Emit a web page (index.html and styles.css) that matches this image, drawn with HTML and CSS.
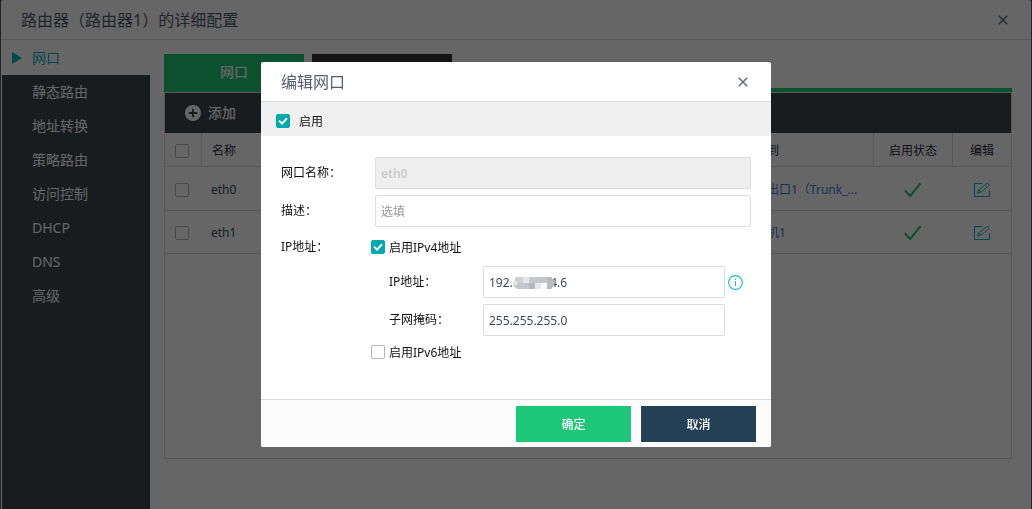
FILE: index.html
```html
<!DOCTYPE html>
<html lang="zh-CN">
<head>
<meta charset="utf-8">
<title>路由器（路由器1）的详细配置</title>
<meta name="viewport" content="width=device-width, initial-scale=1">
<link rel="stylesheet" href="styles.css">
</head>
<body>
<div class="page">
  <header class="page-header">
    <h1 class="title">路由器（路由器1）的详细配置</h1>
    <button class="close" type="button" aria-label="关闭"><svg width="10" height="10" viewBox="0 0 10 10"><path d="M.8.8l8.4 8.4M9.2.8L.8 9.2" fill="none" stroke="currentColor" stroke-width="1.5"/></svg></button>
  </header>
  <div class="page-body">
    <nav class="sidebar">
      <a class="nav-item active" href="#"><svg class="arrow" width="10" height="12" viewBox="0 0 10 12"><path d="M0 0l10 6L0 12z" fill="currentColor"/></svg>网口</a>
      <a class="nav-item" href="#">静态路由</a>
      <a class="nav-item" href="#">地址转换</a>
      <a class="nav-item" href="#">策略路由</a>
      <a class="nav-item" href="#">访问控制</a>
      <a class="nav-item" href="#">DHCP</a>
      <a class="nav-item" href="#">DNS</a>
      <a class="nav-item" href="#">高级</a>
    </nav>
    <main class="content">
      <div class="tabs">
        <button class="tab current" type="button">网口</button>
        <button class="tab" type="button" aria-label="子网口"></button>
      </div>
      <section class="panel">
        <div class="toolbar">
          <button class="add" type="button"><svg width="16" height="16" viewBox="0 0 16 16"><circle cx="8" cy="8" r="8" fill="currentColor"/><path d="M8 3.8v8.4M3.8 8h8.4" stroke="#3c464d" stroke-width="1.8"/></svg>添加</button>
        </div>
        <table class="ports">
          <colgroup><col class="c-check"><col><col class="c-link"><col class="c-state"><col class="c-edit"></colgroup>
          <thead>
            <tr><th class="pick"><input class="check" type="checkbox" aria-label="全选"></th><th class="name">名称</th><th class="link">连接到</th><th class="lined">启用状态</th><th class="lined">编辑</th></tr>
          </thead>
          <tbody>
            <tr>
              <td class="pick"><input class="check" type="checkbox" aria-label="选择 eth0"></td><td class="name">eth0</td><td class="link"><a href="#">网络出口1（Trunk_...</a></td>
              <td><svg class="tick" width="18" height="16" viewBox="0 0 18 16"><path d="M.8 8.3l5.4 5.7L16.4 1.4" fill="none" stroke="currentColor" stroke-width="2"/></svg></td>
              <td><button class="edit" type="button" aria-label="编辑 eth0"><svg width="17" height="16" viewBox="0 0 17 16"><path d="M9.5 1.5h-8v13h15V8.5" fill="none" stroke="currentColor"/><path d="M4.5 11.2l1.2-3.4 8.2-6.2c1.1-.8 2.9.9 2 2L8.2 10zM5.7 7.8L8.2 10" fill="none" stroke="currentColor" stroke-width=".9"/></svg></button></td>
            </tr>
            <tr>
              <td class="pick"><input class="check" type="checkbox" aria-label="选择 eth1"></td><td class="name">eth1</td><td class="link"><a href="#">交换机1</a></td>
              <td><svg class="tick" width="18" height="16" viewBox="0 0 18 16"><path d="M.8 8.3l5.4 5.7L16.4 1.4" fill="none" stroke="currentColor" stroke-width="2"/></svg></td>
              <td><button class="edit" type="button" aria-label="编辑 eth1"><svg width="17" height="16" viewBox="0 0 17 16"><path d="M9.5 1.5h-8v13h15V8.5" fill="none" stroke="currentColor"/><path d="M4.5 11.2l1.2-3.4 8.2-6.2c1.1-.8 2.9.9 2 2L8.2 10zM5.7 7.8L8.2 10" fill="none" stroke="currentColor" stroke-width=".9"/></svg></button></td>
            </tr>
          </tbody>
        </table>
      </section>
    </main>
  </div>
</div>

<div class="overlay">
  <form class="dialog" role="dialog" aria-labelledby="dialog-title">
    <header class="dialog-header">
      <h2 class="title" id="dialog-title">编辑网口</h2>
      <button class="close" type="button" aria-label="关闭"><svg width="10" height="10" viewBox="0 0 10 10"><path d="M.8.8l8.4 8.4M9.2.8L.8 9.2" fill="none" stroke="currentColor" stroke-width="1.5"/></svg></button>
    </header>
    <label class="enable"><input class="check" type="checkbox" checked><span class="caption">启用</span></label>
    <div class="fields">
      <div class="row">
        <label class="label" for="port">网口名称：</label>
        <input class="text wide" id="port" type="text" value="eth0" disabled>
      </div>
      <div class="row">
        <label class="label" for="desc">描述：</label>
        <input class="text wide" id="desc" type="text" placeholder="选填">
      </div>
      <div class="row check-row">
        <span class="label">IP地址：</span>
        <label class="option"><input class="check" type="checkbox" checked><span class="caption">启用IPv4地址</span></label>
      </div>
      <div class="row sub">
        <label class="label" for="ip">IP地址：</label>
        <div class="masked">
          <input class="text" id="ip" type="text" value="192.            4.6">
          <svg class="mosaic" width="41" height="12" viewBox="0 0 41 12"><path d="M3 0h35l3 4v4l-3 4H4L0 8z" fill="#c3c6ca"/><path d="M0 4h4v4H0zM10 0h6v6h-6z" fill="#e6e7e9"/><path d="M4 0h6v6H4z" fill="#d0d2d5"/><path d="M16 6h6v6h-6z" fill="#b4b7bd"/><path d="M22 6h6v6h-6z" fill="#e6e7e9"/><path d="M34 0h4l3 4v4l-3 4h-4z" fill="#b9bbc1"/><path d="M28 6h6v6h-6z" fill="#fff"/></svg>
        </div>
        <svg class="info" width="15" height="15" viewBox="0 0 15 15"><circle cx="7.5" cy="7.5" r="6.9" fill="none" stroke="currentColor" stroke-width="1.1"/><path d="M7.5 6v5M7.5 3.8v1.2" stroke="currentColor"/></svg>
      </div>
      <div class="row sub">
        <label class="label" for="mask">子网掩码：</label>
        <div class="masked"><input class="text" id="mask" type="text" value="255.255.255.0"></div>
      </div>
      <div class="row last">
        <label class="option"><input class="check" type="checkbox"><span class="caption">启用IPv6地址</span></label>
      </div>
    </div>
    <footer class="dialog-footer">
      <button class="btn ok" type="submit">确定</button>
      <button class="btn cancel" type="button">取消</button>
    </footer>
  </form>
</div>
</body>
</html>
```

FILE: styles.css
```css
* { box-sizing: border-box; }

body {
  margin: 0;
  background: #5a5d60;
  color: #222;
  font: 12px/18px "Noto Sans", "Noto Sans CJK SC", sans-serif;
}

button, input { font: inherit; }
button { border: 0; padding: 0; background: none; cursor: pointer; }
svg { display: block; }
a { color: #3f78dc; text-decoration: none; }

.page {
  display: flex;
  flex-direction: column;
  min-height: 100vh;
  margin: 0 1px;
  background: #fff;
  border-radius: 2px 2px 0 0;
}

.page-header, .dialog-header {
  display: flex;
  align-items: center;
  justify-content: space-between;
  height: 40px;
  padding: 0 23px 0 20px;
  border-bottom: 1px solid #dcdcdc;
}

.title { margin: 0; color: #555c70; font-size: 16px; font-weight: 400; line-height: 24px; }
.close { color: #626a7c; }

.page-body { display: flex; flex: 1; }

.sidebar {
  width: 149px;
  border-left: 1px solid #fff;
  background: #3c464d;
}

.nav-item {
  display: flex;
  align-items: center;
  height: 34px;
  padding-left: 30px;
  color: #fff;
  font-size: 14px;
}

.nav-item.active { height: 35px; padding-left: 10px; gap: 10px; background: #fff; color: #00b7bd; }

.content { flex: 1; padding: 14px 19px 50px 14px; display: flex; flex-direction: column; }

.tabs { display: flex; gap: 8px; height: 38px; background: linear-gradient(#1cc777, #1cc777) bottom / 100% 4px no-repeat; }
.tab { width: 140px; padding-bottom: 2px; background: #333; color: #fff; font-size: 14px; }
.tab.current { background: #1cc777; font-weight: 500; }

.panel { flex: 1; border: 1px solid #dcdcdc; }
.toolbar { display: flex; align-items: center; height: 40px; padding-left: 20px; background: #3c464d; }
.add { display: flex; align-items: center; gap: 7px; color: #fff; font-size: 14px; font-weight: 500; }

.ports { width: 100%; border-collapse: separate; border-spacing: 0; table-layout: fixed; text-align: center; color: #42465a; }
.ports .c-check { width: 36px; }
.ports .c-link { width: 142px; }
.ports .c-state { width: 79px; }
.ports .c-edit { width: 59px; }
.ports th, .ports td { height: 43px; padding: 2px 0 0; border-bottom: 1px solid #dcdcdc; }
.ports th { height: 34px; color: #2b2d3c; font-weight: 400; }
.ports tbody tr:first-child td { height: 44px; }
.ports .pick { padding-right: 2px; }
.ports .name { padding-left: 10px; text-align: left; }
.ports th.name, .ports th.lined { border-left: 1px solid #dcdcdc; }
.ports .link { padding-left: 12px; text-align: left; white-space: nowrap; }
.ports .check, .tick, .edit { margin: 0 auto; }
.tick { color: #1cc777; }
.edit { display: block; color: #00b7bd; }

.check {
  appearance: none;
  display: block;
  flex: none;
  width: 14px;
  height: 14px;
  margin: 0;
  border: 1px solid #b4b4b4;
  border-radius: 2px;
  background: #fff;
}

.check:checked {
  border-color: #00a9ad;
  background: #00a9ad url("data:image/svg+xml,%3Csvg xmlns='http://www.w3.org/2000/svg' viewBox='0 0 12 12'%3E%3Cpath d='M2 5.6l3 3 5-5.4' fill='none' stroke='white' stroke-width='2'/%3E%3C/svg%3E") center / 12px 12px no-repeat;
}

.overlay {
  position: fixed;
  inset: 0;
  display: flex;
  align-items: center;
  justify-content: center;
  background: rgba(0, 0, 0, .6);
}

.dialog {
  width: 510px;
  max-width: 100%;
  border-radius: 2px;
  background: #fff;
  overflow: hidden;
  color: #111;
}

.enable { display: flex; align-items: center; gap: 9px; height: 34px; padding: 4px 15px 0; background: #f0f0f0; }
.caption { padding-top: 2px; }

.fields { display: flex; flex-direction: column; gap: 6px; padding: 21px 20px 37px; }
.row { display: flex; align-items: center; }
.label { flex: none; width: 90px; }
.check-row { height: 27px; }
.option { display: flex; align-items: center; gap: 4px; }
.row.sub { padding: 0 8px 0 108px; }
.sub .label { width: 94px; }
.row.last { padding-left: 90px; }

.text {
  width: 100%;
  height: 32px;
  padding: 0 5px;
  border: 1px solid #dcdcdc;
  border-radius: 2px;
  background: #fff;
  color: #42465a;
}

.text.wide { flex: 1; min-width: 0; margin-left: 4px; }
.text:disabled { background: #eee; color: #ccc; font-weight: 600; }
.text::placeholder { color: #999; opacity: 1; }

.masked { position: relative; flex: 1; margin-right: 18px; }
.mosaic { position: absolute; left: 30px; top: 11px; }
.info { margin-left: -15px; color: #13bfc7; }

.dialog-footer {
  display: flex;
  justify-content: flex-end;
  gap: 10px;
  padding: 6px 15px 5px;
  border-top: 1px solid #dcdcdc;
  background: #fcfcfc;
}

.btn { width: 115px; height: 36px; padding-top: 2px; color: #fff; font-weight: 500; }
.ok { background: #1cc777; }
.cancel { background: #234055; }
```
